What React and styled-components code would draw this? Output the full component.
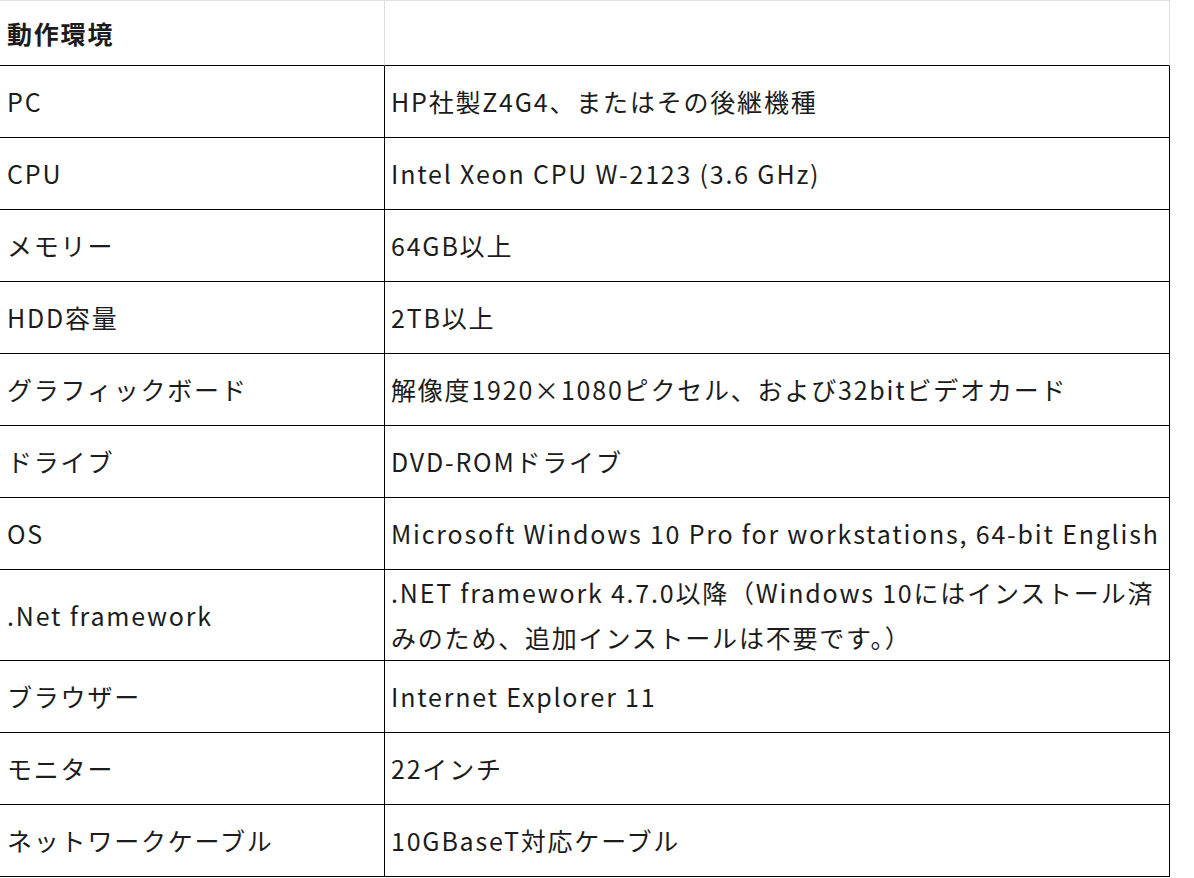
import React from "react";
import styled, { createGlobalStyle } from "styled-components";

const GlobalStyle = createGlobalStyle`
  body {
    margin: 0;
    background: #fff;
    font-family: "Noto Sans CJK JP", "Noto Sans", sans-serif;
    color: #1c1c1c;
  }
`;

const Table = styled.div`
  width: 1170px;
  display: grid;
  grid-template-columns: 385px 785px;
`;

const Cell = styled.div`
  box-sizing: border-box;
  min-height: ${(p) => (p.$head ? "66px" : "72px")};
  display: flex;
  align-items: center;
  padding: 0 0 0 ${(p) => (p.$value ? "6px" : "7px")};
  font-size: 25px;
  letter-spacing: 1.8px;
  line-height: 45px;
  white-space: nowrap;
  overflow: hidden;
  font-weight: ${(p) => (p.$head ? 700 : 400)};
  border-right: 1px solid ${(p) => (p.$head ? "#dcdcdc" : "#000")};
  border-bottom: 1px solid #000;
  border-top: ${(p) => (p.$head ? "1px solid #e2e2e2" : "none")};
`;

const rows = [
  ["PC", "HP社製Z4G4、またはその後継機種"],
  ["CPU", "Intel Xeon CPU W-2123 (3.6 GHz)"],
  ["メモリー", "64GB以上"],
  ["HDD容量", "2TB以上"],
  ["グラフィックボード", "解像度1920×1080ピクセル、および32bitビデオカード"],
  ["ドライブ", "DVD-ROMドライブ"],
  ["OS", "Microsoft Windows 10 Pro for workstations, 64-bit English"],
  [
    ".Net framework",
    <>
      .NET framework 4.7.0以降（Windows 10にはインストール済
      <br />
      みのため、追加インストールは不要です。）
    </>,
  ],
  ["ブラウザー", "Internet Explorer 11"],
  ["モニター", "22インチ"],
  ["ネットワークケーブル", "10GBaseT対応ケーブル"],
];

const App = () => {
  return (
    <>
      <GlobalStyle />
      <Table>
        <Cell $head>動作環境</Cell>
        <Cell $head $value></Cell>
        {rows.map(([label, value], i) => (
          <React.Fragment key={i}>
            <Cell>{label}</Cell>
            <Cell $value>
              <div>{value}</div>
            </Cell>
          </React.Fragment>
        ))}
      </Table>
    </>
  );
};

export default App;
